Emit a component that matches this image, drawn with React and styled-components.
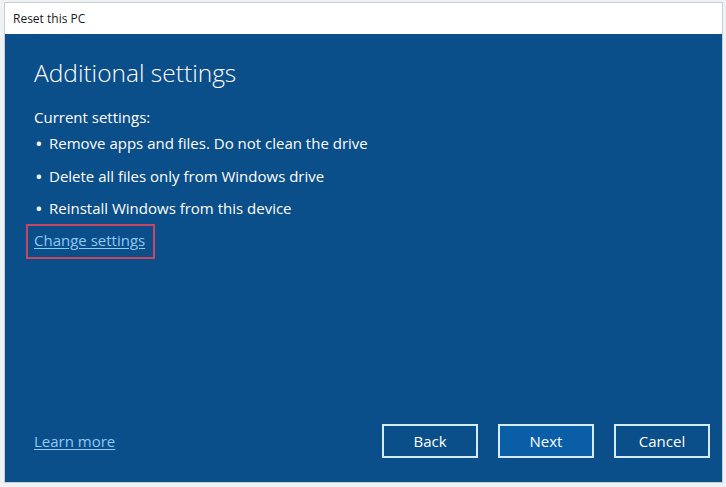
import React from 'react';
import styled, { createGlobalStyle } from 'styled-components';

const GlobalStyle = createGlobalStyle`
  html, body {
    margin: 0;
    padding: 0;
    background: #eef2f5;
  }
  body {
    font-family: "Open Sans", "Noto Sans", sans-serif;
  }
`;

const Page = styled.div`
  width: 726px;
  height: 487px;
  box-sizing: border-box;
  padding: 2px 3px 4px 4px;
`;

const Window = styled.div`
  height: 100%;
  display: flex;
  flex-direction: column;
  border: 1px solid #c9ced3;
  box-sizing: border-box;
  background: #ffffff;
`;

const TitleBar = styled.div`
  height: 31px;
  display: flex;
  align-items: center;
  padding-left: 8px;
  font-size: 12px;
  color: #1a1a1a;
`;

const Body = styled.div`
  flex: 1;
  display: flex;
  flex-direction: column;
  background: #0a4e8a;
  color: #ffffff;
  padding: 24px 12px 24px 29px;
`;

const Heading = styled.h1`
  margin: 0 0 19px;
  font-size: 24.5px;
  font-weight: 300;
  line-height: 30px;
`;

const Label = styled.div`
  font-size: 15px;
  line-height: 20px;
  margin-bottom: 6px;
`;

const List = styled.ul`
  list-style: none;
  margin: 0;
  padding: 0 0 0 2px;
`;

const Item = styled.li`
  display: flex;
  font-size: 15px;
  line-height: 20px;
  margin-bottom: 12.5px;

  &::before {
    content: '•';
    width: 13px;
    flex-shrink: 0;
    font-weight: 700;
  }
`;

const Highlight = styled.div`
  align-self: flex-start;
  margin-left: -8px;
  margin-top: -7px;
  padding: 3px 8px 6px 6px;
  border: 2px solid #c94660;
`;

const Link = styled.a`
  color: #8fc9f4;
  font-size: 15px;
  line-height: 20px;
  text-decoration: underline;
  text-underline-offset: 2px;
  cursor: pointer;
`;

const Footer = styled.div`
  margin-top: auto;
  display: flex;
  align-items: center;
`;

const Buttons = styled.div`
  margin-left: auto;
  display: flex;
  gap: 20px;
`;

const Button = styled.button`
  width: 96px;
  height: 34px;
  box-sizing: border-box;
  border: 2px solid #d6ebf8;
  background: ${p => (p.primary ? '#0a5ea8' : 'transparent')};
  color: #ffffff;
  font-family: inherit;
  font-size: 15px;
  cursor: pointer;
`;

export default function App() {
  return (
    <>
      <GlobalStyle />
      <Page>
        <Window>
          <TitleBar>Reset this PC</TitleBar>
          <Body>
            <Heading>Additional settings</Heading>
            <Label>Current settings:</Label>
            <List>
              <Item>Remove apps and files. Do not clean the drive</Item>
              <Item>Delete all files only from Windows drive</Item>
              <Item>Reinstall Windows from this device</Item>
            </List>
            <Highlight>
              <Link>Change settings</Link>
            </Highlight>
            <Footer>
              <Link>Learn more</Link>
              <Buttons>
                <Button>Back</Button>
                <Button primary>Next</Button>
                <Button>Cancel</Button>
              </Buttons>
            </Footer>
          </Body>
        </Window>
      </Page>
    </>
  );
}
